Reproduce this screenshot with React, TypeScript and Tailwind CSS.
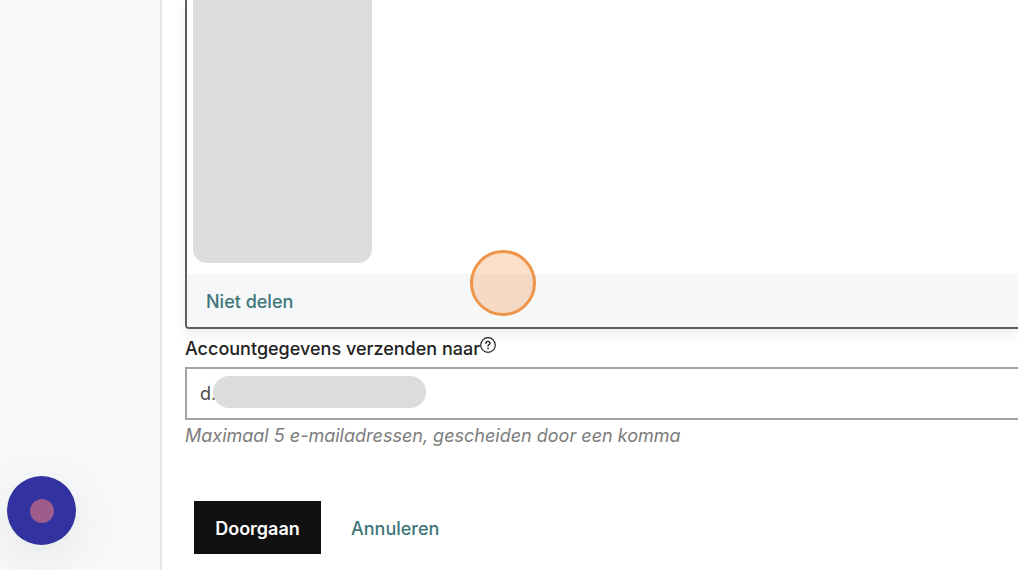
import React, { useState } from 'react';

function HelpIcon() {
  return (
    <svg viewBox="0 0 16 16" className="size-4" fill="none" stroke="currentColor" strokeLinecap="round" aria-hidden="true">
      <circle cx="8" cy="8" r="7.3" strokeWidth="1.2" />
      <path d="M6 6.4C6 5.1 6.8 4.4 8 4.4s2 .8 2 1.8c0 1.3-2 1.4-2 3" strokeWidth="1.4" />
      <circle cx="8" cy="11.5" r=".5" fill="currentColor" strokeWidth=".7" />
    </svg>
  );
}

function Sidebar() {
  return (
    <aside className="flex w-[162px] shrink-0 items-end overflow-hidden border-r-2 border-[#e6e7e8] bg-[#f6f8fa] pb-[25px] pl-[7px]">
      <button
        type="button"
        aria-label="Chat"
        className="flex size-[69px] items-center justify-center rounded-full bg-[#3232a0] shadow-[0_12px_48px_rgba(0,0,0,0.08)]"
      >
        <span className="size-6 rounded-full bg-[#9d5c8c]" />
      </button>
    </aside>
  );
}

function SharePanel() {
  return (
    <section className="relative rounded-bl-[4px] border-b-2 border-l-2 border-[#5d5f63] shadow-[0_6px_12px_rgba(0,0,0,0.07)]">
      <div className="h-[274px] bg-white pl-[6px]">
        <div className="h-[263px] w-[179px] rounded-b-[14px] bg-[#dcdcdc]" />
      </div>
      <div className="flex h-[53px] items-center rounded-bl-[2px] bg-[#f5f7f9] pt-[2px] pl-[19px]">
        <button type="button" className="text-lg font-medium text-[#3f7779]">
          Niet delen
        </button>
      </div>
      {/* click marker */}
      <span className="absolute top-[250px] left-[283px] size-[66px] rounded-full border-[3px] border-[#ee944b] bg-[#f2954b]/30" />
    </section>
  );
}

export default function App() {
  const [emails, setEmails] = useState('d.');

  return (
    <div className="flex bg-white pr-[6px] font-['Inter','Liberation_Sans',sans-serif] text-[#222222]">
      <Sidebar />
      <main className="min-w-0 flex-1 overflow-hidden pb-4 pl-[23px]">
        <SharePanel />
        <form onSubmit={e => e.preventDefault()}>
          <div className="flex h-[38px] items-start pt-2">
            <label htmlFor="emails" className="text-lg leading-6 font-medium">
              Accountgegevens verzenden naar
            </label>
            <button type="button" aria-label="Help">
              <HelpIcon />
            </button>
          </div>
          <div className="relative">
            <input
              id="emails"
              value={emails}
              onChange={e => setEmails(e.target.value)}
              aria-describedby="emails-hint"
              className="block h-[53px] w-full border-2 border-r-0 border-[#a3a3a3] pl-[13px] text-lg text-[#4a4a4a] outline-none"
            />
            <span className="absolute top-[9px] left-[28px] h-8 w-[213px] rounded-full bg-[#dcdcdc]" />
          </div>
          <p id="emails-hint" className="mt-1 text-lg leading-6 text-[#7c7c7c] italic">
            Maximaal 5 e-mailadressen, gescheiden door een komma
          </p>
          <div className="mt-[53px] flex items-center gap-[30px] pl-[9px]">
            <button type="submit" className="h-[53px] w-[127px] bg-[#111111] pt-[2px] text-lg font-semibold text-white">
              Doorgaan
            </button>
            <button type="button" className="pt-[2px] text-lg font-medium text-[#3f7779]">
              Annuleren
            </button>
          </div>
        </form>
      </main>
    </div>
  );
}
